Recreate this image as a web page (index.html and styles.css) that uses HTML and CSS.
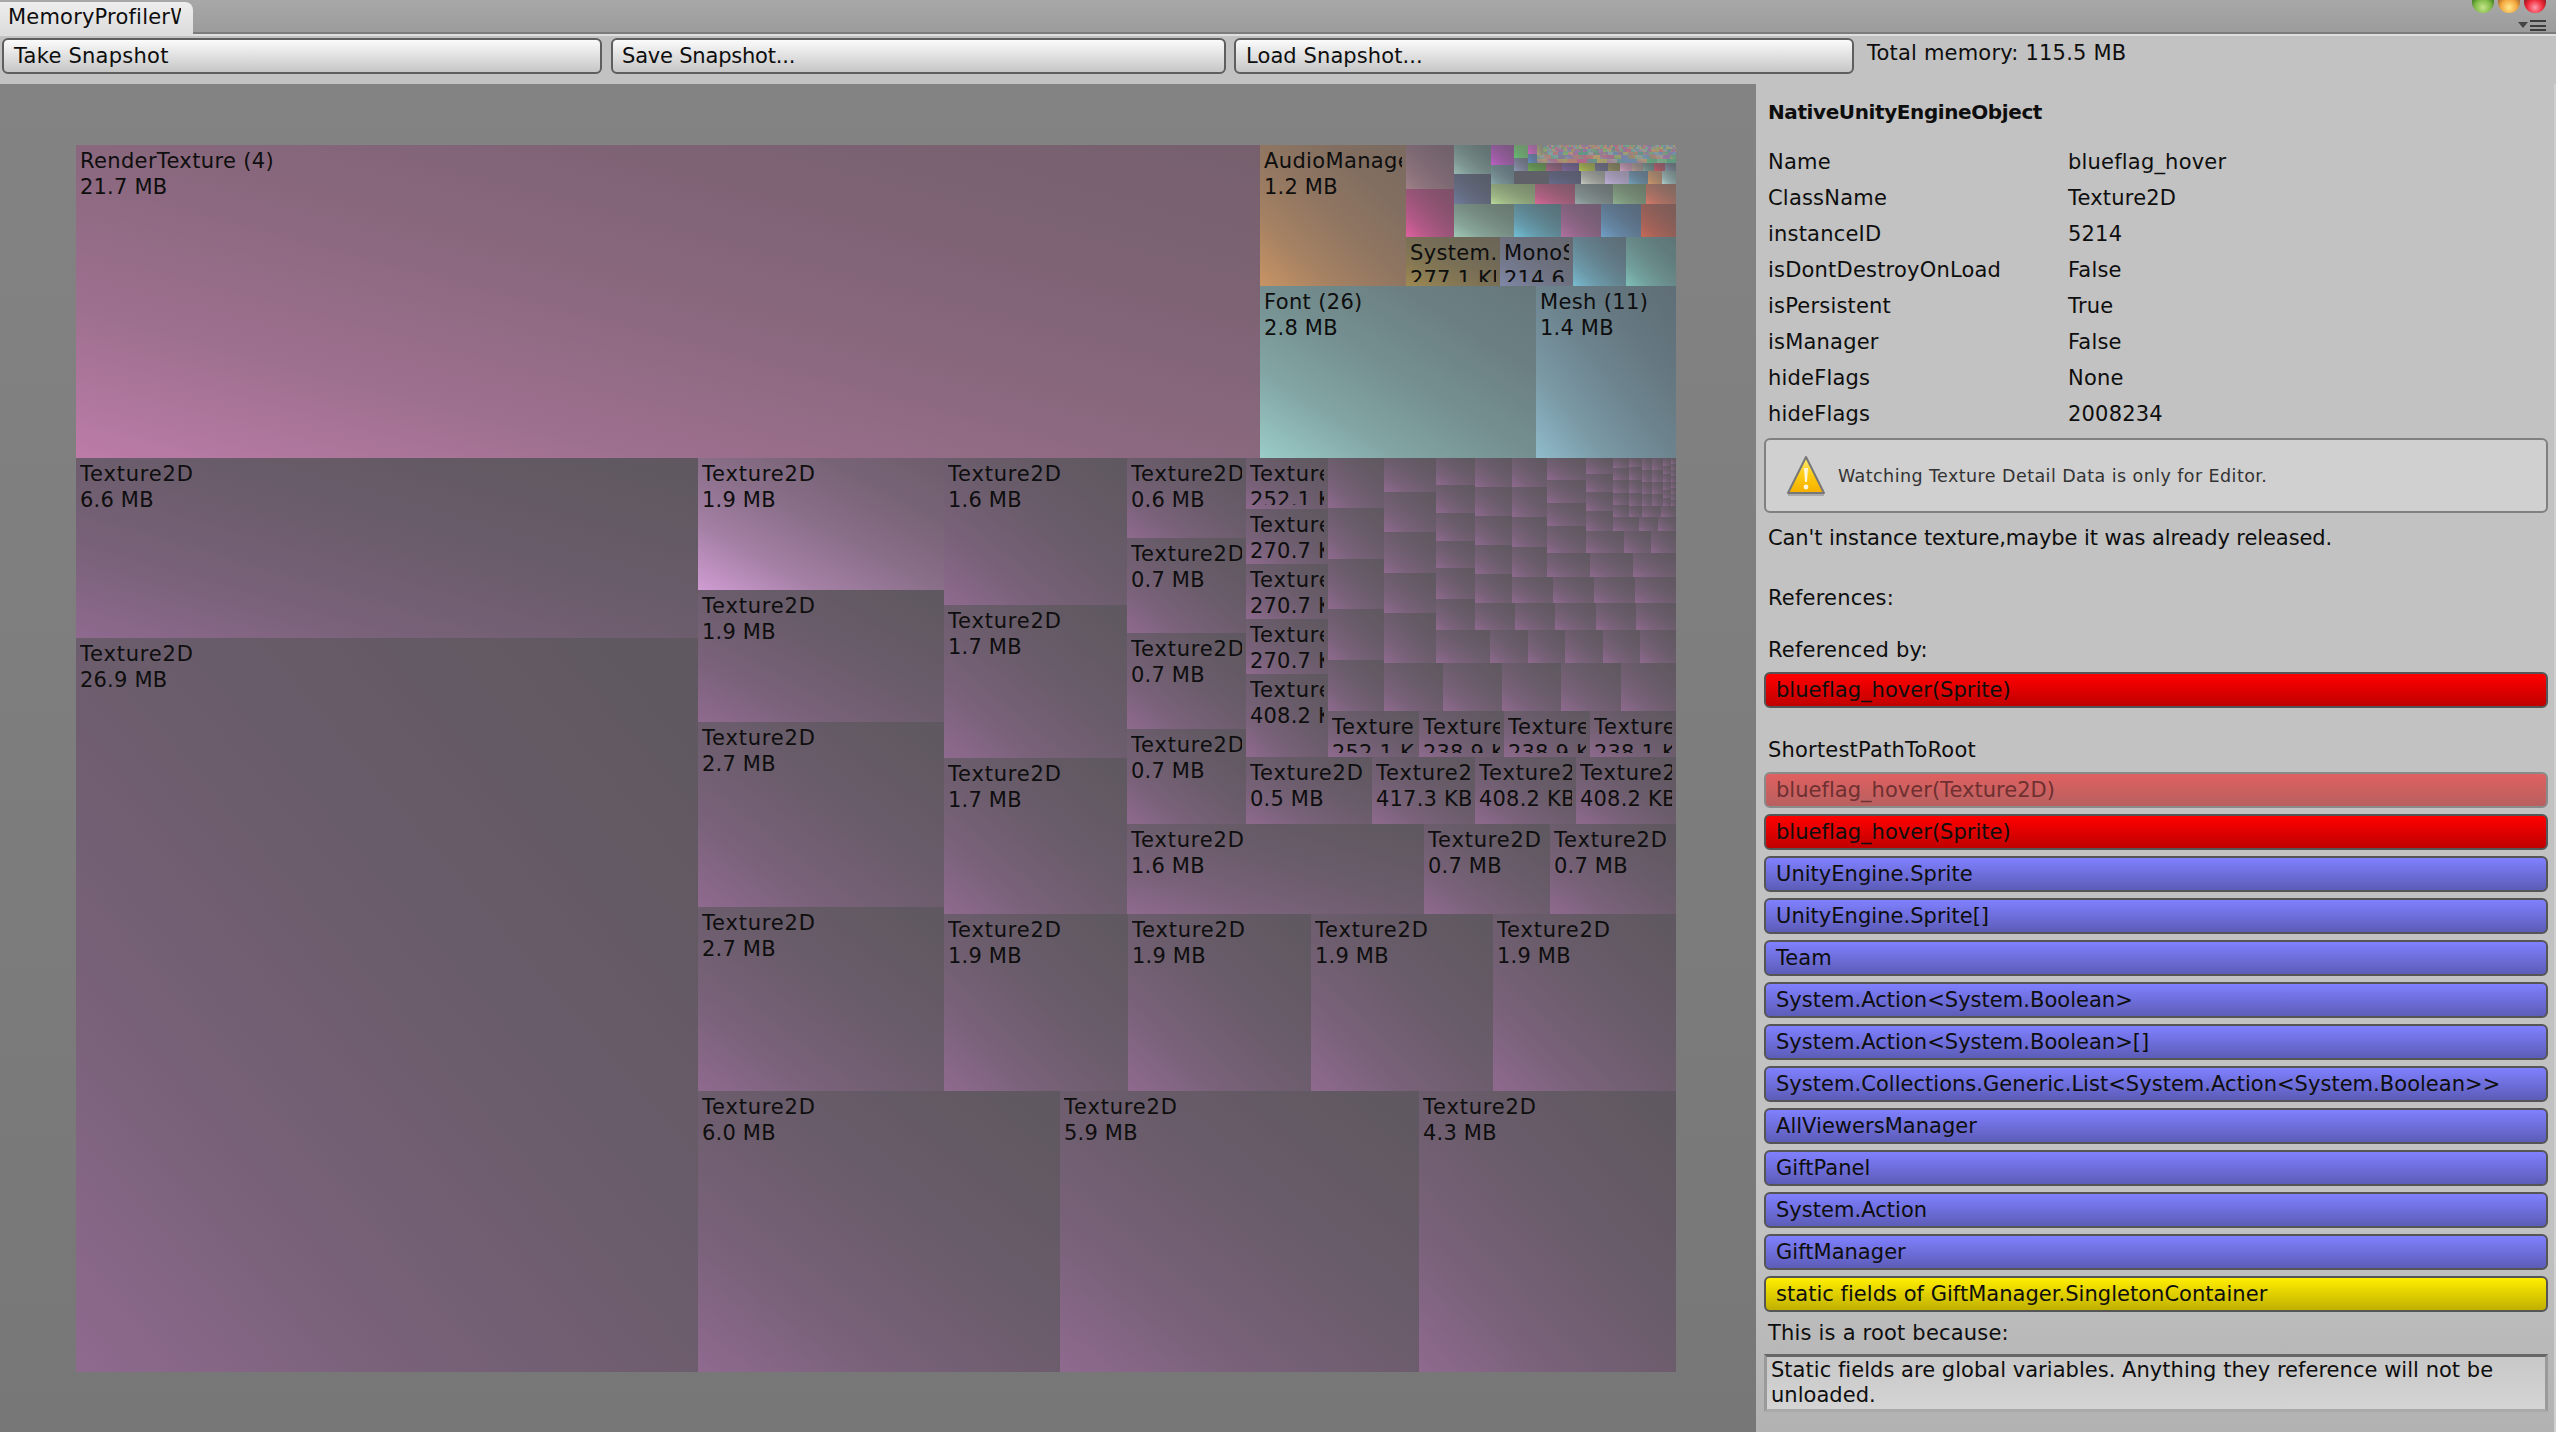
FILE: index.html
```html
<!DOCTYPE html>
<html lang="en">
<head>
    <meta charset="UTF-8">
    <title>MemoryProfiler</title>
    <link rel="stylesheet" href="styles.css">
</head>
<body>
<div class="tab_strip">
    <div class="tab"><span class="tab_title">MemoryProfilerWindow</span></div>
    <svg class="window_controls" width="90" height="32" viewBox="0 0 90 32">
        <defs>
            <radialGradient id="lightGreen" cx="50%" cy="75%" r="60%"><stop offset="0" stop-color="#c4e48c"/><stop offset="0.6" stop-color="#82bc48"/><stop offset="1" stop-color="#3c7a20"/></radialGradient>
            <radialGradient id="lightOrange" cx="50%" cy="75%" r="60%"><stop offset="0" stop-color="#ffe88c"/><stop offset="0.6" stop-color="#f4a840"/><stop offset="1" stop-color="#a8682c"/></radialGradient>
            <radialGradient id="lightRed" cx="50%" cy="75%" r="60%"><stop offset="0" stop-color="#ff9cac"/><stop offset="0.6" stop-color="#f02838"/><stop offset="1" stop-color="#901820"/></radialGradient>
        </defs>
        <circle cx="17" cy="2" r="11" fill="url(#lightGreen)"/>
        <circle cx="43" cy="2" r="11" fill="url(#lightOrange)"/>
        <circle cx="69" cy="2" r="11" fill="url(#lightRed)"/>
        <path d="M52 22h10l-5 6z" fill="#444"/>
        <path d="M64 20h16v2H64zM64 25h16v2H64zM64 29h16v2H64z" fill="#3c3c3c"/>
    </svg>
</div>

<div class="toolbar">
    <button class="tool_btn take_btn">Take Snapshot</button>
    <button class="tool_btn save_btn">Save Snapshot...</button>
    <button class="tool_btn load_btn">Load Snapshot...</button>
    <div class="total_memory">Total memory: 115.5 MB</div>
</div>

<div class="main">
    <div class="map_area">
        <div class="treemap" id="treemap"></div>
    </div>

    <div class="details">
        <div class="detail_title">NativeUnityEngineObject</div>
        <div class="prop"><span class="prop_name">Name</span><span>blueflag_hover</span></div>
        <div class="prop"><span class="prop_name">ClassName</span><span>Texture2D</span></div>
        <div class="prop"><span class="prop_name">instanceID</span><span>5214</span></div>
        <div class="prop"><span class="prop_name">isDontDestroyOnLoad</span><span>False</span></div>
        <div class="prop"><span class="prop_name">isPersistent</span><span>True</span></div>
        <div class="prop"><span class="prop_name">isManager</span><span>False</span></div>
        <div class="prop"><span class="prop_name">hideFlags</span><span>None</span></div>
        <div class="prop"><span class="prop_name">hideFlags</span><span>2008234</span></div>

        <div class="warning_box">
            <svg class="warning_icon" width="40" height="42" viewBox="0 0 40 42">
                <defs>
                    <linearGradient id="warnFill" x1="0" y1="0" x2="0" y2="1"><stop offset="0" stop-color="#ffe97a"/><stop offset="0.5" stop-color="#ffcc10"/><stop offset="1" stop-color="#f5ae00"/></linearGradient>
                </defs>
                <path d="M20 2L38 38H2z" fill="url(#warnFill)" stroke="#777" stroke-width="2" stroke-linejoin="round"/>
                <path d="M18 13h4l-1 14h-2z" fill="#fff8d8"/>
                <circle cx="20" cy="32" r="2.4" fill="#fff8d8"/>
                <path d="M2 40h36" stroke="#aaa" stroke-width="2"/>
            </svg>
            <span>Watching Texture Detail Data is only for Editor.</span>
        </div>

        <div class="line can_not">Can't instance texture,maybe it was already released.</div>
        <div class="line references">References:</div>
        <div class="line referenced_by">Referenced by:</div>
        <div class="obj_btn red_btn single_btn">blueflag_hover(Sprite)</div>

        <div class="line shortest">ShortestPathToRoot</div>
        <div class="path_list">
            <div class="obj_btn faded_btn">blueflag_hover(Texture2D)</div>
            <div class="obj_btn red_btn">blueflag_hover(Sprite)</div>
            <div class="obj_btn blue_btn">UnityEngine.Sprite</div>
            <div class="obj_btn blue_btn">UnityEngine.Sprite[]</div>
            <div class="obj_btn blue_btn">Team</div>
            <div class="obj_btn blue_btn">System.Action&lt;System.Boolean&gt;</div>
            <div class="obj_btn blue_btn">System.Action&lt;System.Boolean&gt;[]</div>
            <div class="obj_btn blue_btn">System.Collections.Generic.List&lt;System.Action&lt;System.Boolean&gt;&gt;</div>
            <div class="obj_btn blue_btn">AllViewersManager</div>
            <div class="obj_btn blue_btn">GiftPanel</div>
            <div class="obj_btn blue_btn">System.Action</div>
            <div class="obj_btn blue_btn">GiftManager</div>
            <div class="obj_btn yellow_btn">static fields of GiftManager.SingletonContainer</div>
        </div>

        <div class="line root_label">This is a root because:</div>
        <div class="root_reason">Static fields are global variables. Anything they reference will not be unloaded.</div>
    </div>
</div>
<script src="treemap.js"></script>
</body>
</html>
```

FILE: styles.css
```css
* {
    box-sizing: border-box;
}

html, body {
    margin: 0;
    height: 100%;
}

body {
    width: 2556px;
    height: 1432px;
    overflow: hidden;
    display: flex;
    flex-direction: column;
    font-family: "DejaVu Sans", "Liberation Sans", sans-serif;
    font-size: 21px;
    letter-spacing: 0.2px;
    color: #0e0e0e;
    background-color: #c2c2c2;
}

.tab_strip {
    height: 34px;
    flex: none;
    display: flex;
    justify-content: space-between;
    background: linear-gradient(#a8a8a8, #9c9c9c);
    border-bottom: 2px solid #7c7c7c;
}

.tab {
    position: relative;
    width: 193px;
    height: 32px;
    margin-top: 2px;
    padding: 1px 12px 0 8px;
    line-height: 28px;
    background: linear-gradient(#eeeeee, #dcdcdc);
    border-radius: 0 8px 0 0;
    overflow: hidden;
}

.tab_title {
    display: block;
    overflow: hidden;
    white-space: nowrap;
}

.toolbar {
    height: 50px;
    flex: none;
    display: flex;
    align-items: flex-start;
    padding: 2px 0 0 2px;
    border-top: 2px solid #dedede;
}

.tool_btn {
    height: 36px;
    padding: 0 0 0 10px;
    text-align: left;
    font: inherit;
    letter-spacing: 0.25px;
    color: inherit;
    background: linear-gradient(#fbfbfb, #c6c6c6);
    border: 2px solid #5e5e5e;
    border-radius: 6px;
}

.take_btn {
    width: 600px;
}

.save_btn {
    width: 615px;
    margin-left: 9px;
    padding-left: 9px;
    letter-spacing: -0.2px;
}

.load_btn {
    width: 620px;
    margin-left: 8px;
    letter-spacing: 0.1px;
}

.total_memory {
    margin: -3px 0 0 13px;
    line-height: 36px;
}

.main {
    flex: 1;
    display: flex;
    min-height: 0;
}

.map_area {
    width: 1756px;
    flex: none;
    padding: 61px 0 0 76px;
    background: linear-gradient(#838383, #777777);
}

.treemap {
    position: relative;
    width: 1600px;
    height: 1227px;
}

.cell {
    position: absolute;
    line-height: 26px;
    background-image: linear-gradient(to top right,
        var(--from),
        color-mix(in srgb, var(--from) 55%, var(--to)) 25%,
        color-mix(in srgb, var(--from) 28%, var(--to)) 50%,
        color-mix(in srgb, var(--from) 10%, var(--to)) 75%,
        var(--to));
}

.tex {
    --from: #8f6a8f;
    --to: #5f5860;
}

.cell_label {
    height: calc(100% - 7px);
    margin: 3px 4px 4px 4px;
    overflow: hidden;
    white-space: pre;
}

.cell_label::first-line {
    letter-spacing: 0.35px;
}

.tex_label::first-line {
    letter-spacing: 0.8px;
}

.details {
    flex: 1;
    padding: 10px 6px 0 8px;
    background: linear-gradient(#c2c2c2 85%, #b2b2b2);
    border-right: 2px solid #d0d0d0;
}

.detail_title {
    height: 36px;
    margin: 0 0 14px 4px;
    line-height: 36px;
    font-size: 20px;
    font-weight: bold;
    letter-spacing: -0.4px;
}

.prop {
    display: flex;
    height: 36px;
    margin-left: 4px;
    line-height: 36px;
}

.prop_name {
    width: 300px;
}

.warning_box {
    display: flex;
    align-items: center;
    height: 75px;
    margin-top: 6px;
    padding-left: 20px;
    font-size: 17.5px;
    letter-spacing: 0.43px;
    color: #333333;
    background-color: #d0d0d0;
    border: 2px solid #808080;
    border-radius: 6px;
}

.warning_icon {
    margin-right: 12px;
}

.line {
    height: 36px;
    margin-left: 4px;
    line-height: 36px;
}

.can_not {
    margin-top: 7px;
    letter-spacing: -0.08px;
}

.references {
    margin-top: 24px;
}

.referenced_by {
    margin-top: 16px;
}

.obj_btn {
    height: 36px;
    padding-left: 10px;
    line-height: 32px;
    letter-spacing: 0.03px;
    white-space: nowrap;
    border: 2px solid #555555;
    border-radius: 6px;
}

.single_btn {
    margin-top: 4px;
}

.shortest {
    margin-top: 24px;
}

.path_list {
    display: flex;
    flex-direction: column;
    gap: 6px;
    margin-top: 4px;
}

.red_btn {
    background: linear-gradient(#ff0000, #c00000);
}

.faded_btn {
    color: #6e3030;
    background: linear-gradient(#e06060, #b86060);
    border-color: #8a8a8a;
}

.blue_btn {
    background: linear-gradient(#8080ff, #5c5cb8);
}

.yellow_btn {
    background: linear-gradient(#ffee00, #c0b000);
}

.root_label {
    margin-top: 3px;
}

.root_reason {
    height: 58px;
    margin-top: 3px;
    padding: 1px 6px 0 4px;
    line-height: 25px;
    letter-spacing: 0.03px;
    background: linear-gradient(#c8c8c8, #d4d4d4);
    border: 3px solid #9a9a9a;
    border-top-color: #666666;
    border-bottom-color: #aaaaaa;
}
```

FILE: treemap.js
```js
// all coords are page pixels, shifted by the map origin when the cells are made
const MAP_X = 76;
const MAP_Y = 145;
const map = document.getElementById("treemap");

function cell(x0, y0, x1, y1, text, from, to) {
    const el = document.createElement("div");
    el.className = from ? "cell" : "cell tex";
    el.style.left = (x0 - MAP_X) + "px";
    el.style.top = (y0 - MAP_Y) + "px";
    el.style.width = (x1 - x0) + "px";
    el.style.height = (y1 - y0) + "px";
    if (from) {
        el.style.setProperty("--from", from);
        el.style.setProperty("--to", to);
    }
    if (text) {
        const label = document.createElement("div");
        label.className = text.startsWith("Texture2D") ? "cell_label tex_label" : "cell_label";
        label.textContent = text;
        el.appendChild(label);
    }
    map.appendChild(el);
}

// a stack of cells in one column, ys are the edges
function column(x0, x1, ys, labels) {
    for (let i = 0; i < ys.length - 1; i++) {
        cell(x0, ys[i], x1, ys[i + 1], labels ? labels[i] : "");
    }
}

// a run of cells in one row, xs are the edges
function row(y0, y1, xs, labels) {
    for (let i = 0; i < xs.length - 1; i++) {
        cell(xs[i], y0, xs[i + 1], y1, labels ? labels[i] : "");
    }
}

function tex(size) {
    return "Texture2D\n" + size;
}

// big groups
cell(76, 145, 1260, 458, "RenderTexture (4)\n21.7 MB", "#bc7ca8", "#76606e");
cell(1260, 145, 1406, 286, "AudioManager\n1.2 MB", "#c89464", "#7a6a60");
cell(1260, 286, 1536, 458, "Font (26)\n2.8 MB", "#9accc8", "#66777a");
cell(1536, 286, 1676, 458, "Mesh (11)\n1.4 MB", "#90bccc", "#5f6e76");
cell(1406, 237, 1500, 286, "System.Int32\n277.1 KB", "#a08a50", "#6a6558");
cell(1500, 237, 1573, 286, "MonoScript\n214.6 KB", "#8088a8", "#666870");
cell(1573, 237, 1626, 286, "", "#78bcd0", "#5c6c76");
cell(1626, 237, 1676, 286, "", "#80c0b8", "#5e7476");

// small coloured blocks of the top right group
cell(1406, 145, 1454, 189, "", "#a08088", "#70606a");
cell(1406, 189, 1454, 237, "", "#e060a0", "#7c5068");
cell(1454, 145, 1491, 174, "", "#98b8b0", "#607070");
cell(1454, 174, 1491, 204, "", "#707c9c", "#585c68");
cell(1491, 145, 1514, 165, "", "#c060c8", "#7a5880");
cell(1491, 165, 1514, 184, "", "#88a8a8", "#607078");
[
    [1491, 1535, "#b8d898", "#78886c"], [1535, 1575, "#d86898", "#805868"], [1575, 1613, "#98a8a8", "#687070"],
    [1613, 1646, "#90b090", "#687868"], [1646, 1676, "#d87868", "#806860"]
].forEach(c => cell(c[0], 184, c[1], 204, "", c[2], c[3]));
[
    [1454, 1514, "#a0c8b8", "#687870"], [1514, 1561, "#70c0d8", "#587078"], [1561, 1601, "#b070a0", "#705c70"],
    [1601, 1641, "#70a0c8", "#58687a"], [1641, 1676, "#c86858", "#7c5c58"]
].forEach(c => cell(c[0], 204, c[1], 237, "", c[2], c[3]));
[
    [1514, 1549, "#606068", "#606068"], [1549, 1581, "#686c8c", "#585a6c"], [1581, 1605, "#c8c8c0", "#808480"],
    [1605, 1629, "#c0b0d8", "#908aa0"], [1629, 1648, "#70a0b8", "#607080"], [1648, 1662, "#d09868", "#907868"],
    [1662, 1676, "#b0d0d0", "#708080"]
].forEach(c => cell(c[0], 171, c[1], 184, "", c[2], c[3]));
[
    [1528, 1546, "#70a858", "#5c7c50"], [1546, 1562, "#a86888", "#705868"], [1562, 1579, "#806898", "#605878"],
    [1579, 1595, "#b0c050", "#808850"], [1595, 1608, "#707088", "#606070"], [1608, 1620, "#908860", "#707058"],
    [1620, 1632, "#d0a0c0", "#907888"], [1632, 1643, "#b09890", "#807878"], [1643, 1654, "#80a098", "#607070"],
    [1654, 1665, "#c05868", "#805860"], [1665, 1676, "#8090a0", "#606870"]
].forEach(c => cell(c[0], 163, c[1], 171, "", c[2], c[3]));
cell(1514, 145, 1528, 158, "", "#60c070", "#70906c");
cell(1514, 158, 1528, 171, "", "#9098b8", "#686c78");
cell(1528, 145, 1537, 154, "", "#d060c0", "#906890");
cell(1528, 154, 1537, 163, "", "#6090c8", "#607088");

// the noise in the corner: cells get smaller towards the top right
const noise = ["#70a878", "#a87098", "#7088a8", "#a0a068", "#b08070", "#80a0a0", "#8878a0", "#989898", "#b09870", "#609880", "#b06888", "#808090"];
let seed = 7;
function pick() {
    seed = (seed * 1103 + 4721) % 9973;
    return noise[seed % noise.length];
}
[[145, 147, 2], [147, 149, 3], [149, 152, 4], [152, 155, 5], [155, 159, 7], [159, 163, 10]].forEach(r => {
    const start = r[0] >= 155 ? 1537 : 1543;
    for (let x = start; x < 1676; x += r[2]) {
        cell(x, r[0], Math.min(x + r[2], 1676), r[1], "", pick(), pick());
    }
});
cell(1537, 145, 1543, 155, "", "#b0a870", "#808078");

// texture grid below
column(76, 698, [458, 638, 1372], [tex("6.6 MB"), tex("26.9 MB")]);
cell(698, 458, 944, 590, tex("1.9 MB"), "#d09cd3", "#6e5d6c");
column(698, 944, [590, 722, 907, 1091], [tex("1.9 MB"), tex("2.7 MB"), tex("2.7 MB")]);
column(944, 1127, [458, 605, 758, 914], [tex("1.6 MB"), tex("1.7 MB"), tex("1.7 MB")]);
column(1127, 1246, [458, 538, 633, 729, 824], [tex("0.6 MB"), tex("0.7 MB"), tex("0.7 MB"), tex("0.7 MB")]);
row(824, 914, [1127, 1424, 1550, 1676], [tex("1.6 MB"), tex("0.7 MB"), tex("0.7 MB")]);
row(914, 1091, [944, 1128, 1311, 1493, 1676], [tex("1.9 MB"), tex("1.9 MB"), tex("1.9 MB"), tex("1.9 MB")]);
row(1091, 1372, [698, 1060, 1419, 1676], [tex("6.0 MB"), tex("5.9 MB"), tex("4.3 MB")]);

column(1246, 1328, [458, 509, 564, 619, 674, 757], [tex("252.1 KB"), tex("270.7 KB"), tex("270.7 KB"), tex("270.7 KB"), tex("408.2 KB")]);
row(757, 824, [1246, 1372, 1475, 1576, 1676], [tex("0.5 MB"), tex("417.3 KB"), tex("408.2 KB"), tex("408.2 KB")]);
row(711, 757, [1328, 1419, 1504, 1590, 1676], [tex("252.1 KB"), tex("238.9 KB"), tex("238.9 KB"), tex("238.1 KB")]);

column(1328, 1384, [458, 508, 559, 609, 660, 711]);
column(1384, 1436, [458, 492, 532, 573, 613, 663]);
row(663, 711, [1384, 1443, 1502, 1561, 1621, 1676]);
column(1436, 1475, [458, 485, 513, 541, 568, 599, 630]);
row(630, 663, [1436, 1490, 1528, 1565, 1603, 1640, 1676]);
column(1475, 1512, [458, 487, 516, 545, 574, 603]);
row(603, 630, [1475, 1515, 1555, 1596, 1636, 1676]);
column(1512, 1547, [458, 487, 517, 547, 577]);
row(577, 603, [1512, 1553, 1594, 1635, 1676]);
column(1547, 1586, [458, 480, 503, 526, 553, 577]);
row(553, 577, [1547, 1590, 1633, 1676]);
column(1586, 1613, [458, 474, 492, 511, 531, 553]);
row(531, 553, [1586, 1624, 1651, 1676]);
column(1613, 1629, [458, 468, 480, 493, 505, 517, 531]);
row(517, 531, [1613, 1639, 1658, 1676]);
column(1629, 1642, [458, 467, 480, 493, 506, 517]);
row(506, 517, [1642, 1661, 1676]);
column(1642, 1652, [458, 470, 482, 494, 506]);
column(1652, 1663, [458, 470, 482, 494, 506]);
column(1663, 1671, [458, 466, 474, 482, 490, 498, 506]);
column(1671, 1676, [458, 464, 470, 476, 482, 488, 494, 500, 506]);
```
